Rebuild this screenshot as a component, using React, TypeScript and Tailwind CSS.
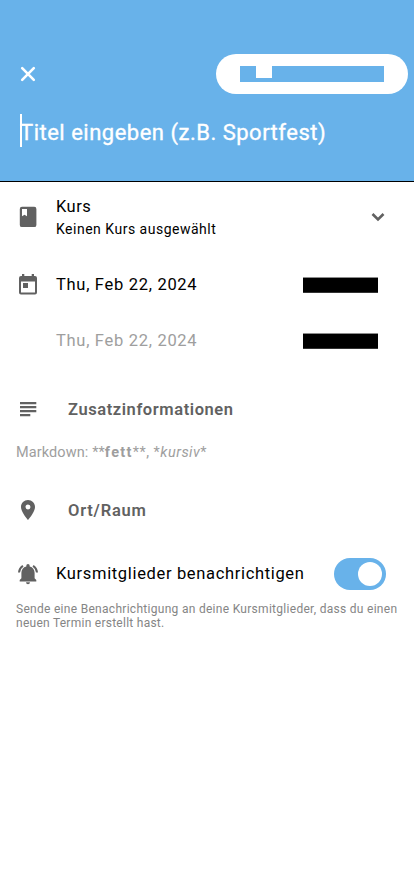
import React from "react";
import { MdLocationOn } from "react-icons/md";

function Icon({ children }: { children: React.ReactNode }) {
  return (
    <svg width="24" height="24" viewBox="0 0 24 24" fill="currentColor" className="shrink-0 text-[#616161]">
      {children}
    </svg>
  );
}

function Header() {
  return (
    <header className="h-[182px] border-b border-black bg-[#68b2ea] pt-[54px] text-white">
      <div className="flex h-10 items-center justify-between pl-4 pr-1.5">
        <button aria-label="close" className="flex size-6 items-center justify-center">
          <svg width="24" height="24" viewBox="0 0 24 24" fill="none" stroke="currentColor" strokeWidth="2.6" strokeLinecap="round">
            <path d="M6.2 6.2 17.8 17.8M17.8 6.2 6.2 17.8" />
          </svg>
        </button>
        <div className="h-10 w-48 rounded-full bg-white px-6 pt-3">
          <div className="h-4 bg-[#68b2ea] pl-4">
            <div className="h-3 w-4 bg-white" />
          </div>
        </div>
      </div>
      <div className="mt-5 flex h-[33px] items-center pl-5">
        <span className="h-[33px] w-0.5 bg-white" />
        <span className="-ml-0.5 mt-[5px] whitespace-nowrap text-[22px] leading-[30px] font-normal tracking-[0.5px] [-webkit-text-stroke:0.35px_white]">
          Titel eingeben (z.B. Sportfest)
        </span>
      </div>
    </header>
  );
}

function Censored() {
  return <span className="mr-9 -mt-1 ml-auto h-4 w-[75px] border-t border-b border-t-[#8c8c8c] border-b-[#333] bg-black" />;
}

export default function App() {
  return (
    <main className="h-[896px] w-[414px] overflow-hidden bg-white font-['Roboto',sans-serif] text-[16.5px] leading-6 text-black">
      <Header />
      <section className="flex h-[70px] items-center pl-4 pr-6">
        <Icon>
          <path fillRule="evenodd" d="M6 1.7h12.2a2.2 2.2 0 0 1 2.2 2.2v16a2.2 2.2 0 0 1-2.2 2.2H6a2.2 2.2 0 0 1-2.2-2.2v-16A2.2 2.2 0 0 1 6 1.7zM6 4v7.3L8.5 9.8 11 11.300V4z" />
        </Icon>
        <div className="ml-4 flex-1 whitespace-nowrap">
          <p className="mt-px leading-6 tracking-[0.45px]">Kurs</p>
          <p className="-mt-px text-[14px] leading-[22px] tracking-[0.5px]">Keinen Kurs ausgewählt</p>
        </div>
        <Icon>
          <path d="m6.500 9 5.500 5.500L17.500 9" fill="none" stroke="currentColor" strokeWidth="2.6" />
        </Icon>
      </section>
      <section className="mt-1 flex h-14 items-center pl-4 pt-1.5">
        <div className="-mt-1">
          <Icon>
            <path fillRule="evenodd" d="M19 3h-1V1h-2.300v2H8.300V1H6v2H5a2 2 0 0 0-2 2v14.500a2 2 0 0 0 2 2h14a2 2 0 0 0 2-2V5a2 2 0 0 0-2-2zM5 8.500h14v11H5zM7 10h5v5H7z" />
          </Icon>
        </div>
        <span className="ml-4 -mt-1 tracking-[0.7px]">Thu, Feb 22, 2024</span>
        <Censored />
      </section>
      <section className="flex h-14 items-center pl-14 pt-1.5">
        <span className="-mt-1 tracking-[0.7px] text-[#9e9e9e]">Thu, Feb 22, 2024</span>
        <Censored />
      </section>
      <section className="mt-[17px] flex h-12 items-center pl-4 text-[#616161]">
        <Icon>
          <path d="M4 5h16.300v2.300H4zM4 9h16.300v2.300H4zM4 13h16.300v2.300H4zM4 17h10.300v2.300H4z" />
        </Icon>
        <span className="ml-7 mt-0.5 font-semibold tracking-[0.58px]">Zusatzinformationen</span>
      </section>
      <p className="mt-2.5 pl-4 text-[14.500px] leading-5 tracking-[0.48px] text-[#9e9e9e]">
        <span className="tracking-[0.1px]">Markdown: **</span>
        <b className="tracking-[1.300px]">fett</b>**, *<i>kursiv</i>*
      </p>
      <section className="mt-[23px] flex h-12 items-center pl-4 text-[#616161]">
        <MdLocationOn size={24} />
        <span className="ml-7 mt-0.5 font-semibold tracking-[0.78px]">Ort/Raum</span>
      </section>
      <section className="mt-4 flex h-12 items-center pl-4 pr-7">
        <Icon>
          <path d="M12 22.200a2 2 0 0 0 2-1.900h-4a2 2 0 0 0 2 1.900zM18.600 16.200v-5.400c0-3.200-1.800-5.700-4.900-6.400v-.6a1.700 1.700 0 0 0-3.400 0v.6c-3.100.7-4.900 3.200-4.900 6.400v5.400L3.700 18v1.500h16.600V18z" />
          <path d="M3 10.500c.2-2.800 1.600-5 3.900-6.700M21 10.500c-.2-2.800-1.600-5-3.900-6.700" fill="none" stroke="currentColor" strokeWidth="2" />
        </Icon>
        <span className="ml-4 whitespace-nowrap tracking-[0.66px]">Kursmitglieder benachrichtigen</span>
        <span className="ml-auto flex h-8 w-[52px] items-center justify-end rounded-full bg-[#68b2ea] pr-1">
          <span className="size-6 rounded-full bg-white" />
        </span>
      </section>
      <p className="mt-1 whitespace-nowrap pl-4 text-[12px] leading-[14px] text-[#858585]">
        <span className="block tracking-[0.29px]">Sende eine Benachrichtigung an deine Kursmitglieder, dass du einen</span>
        <span className="block tracking-[0.26px]">neuen Termin erstellt hast.</span>
      </p>
    </main>
  );
}
